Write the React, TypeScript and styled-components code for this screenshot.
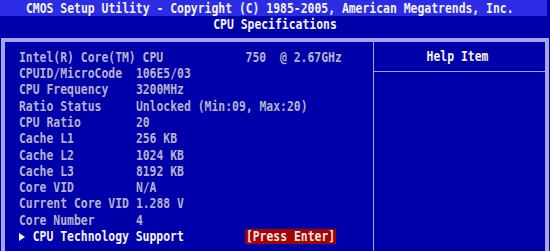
import React from "react";
import styled, { createGlobalStyle } from "styled-components";

const CH = 6.875;
const ROW = 16.3;
const LINE = "#a4a4ee";
const GREY = "#b4b4cc";

const Global = createGlobalStyle`
  html, body { margin: 0; padding: 0; background: #0000aa; overflow: hidden; }
  body { font-family: "DejaVu Sans Mono", "Liberation Mono", monospace; }
`;

const Screen = styled.div`
  width: 550px;
  height: 251px;
  overflow: hidden;
  background: #0000aa;
  display: flex;
  flex-direction: column;
  font-size: 11.42px;
  font-weight: bold;
`;

const Glyphs = styled.span<{ $color?: string }>`
  display: inline-block;
  white-space: pre;
  line-height: 1;
  transform: scaleY(1.22);
  color: ${(p) => p.$color ?? GREY};
`;

const TitleBar = styled.div`
  height: 17px;
  width: 547px;
  box-sizing: border-box;
  padding: 1px 0 0 26px;
  background: #2c2ce6;
  display: flex;
  align-items: center;
`;

const Subtitle = styled.div`
  height: 16px;
  box-sizing: border-box;
  padding-top: 2px;
  display: flex;
  align-items: center;
  justify-content: center;
`;

const Box = styled.div`
  margin: 7px 0 0 1px;
  width: 548px;
  height: 230px;
  box-sizing: border-box;
  border: 4px double ${LINE};
  border-bottom: none;
  display: grid;
  grid-template-columns: 368px 171px;
  column-gap: 1px;
  background: ${LINE};
`;

const LeftPanel = styled.div`
  background: #0000aa;
  padding: 7.6px 0 0 14px;
  display: flex;
  flex-direction: column;
`;

const RightPanel = styled.div`
  background: #0000aa;
  display: flex;
  flex-direction: column;
`;

const HelpHeader = styled.div`
  height: 30px;
  box-sizing: border-box;
  padding: 1px 4px 0 0;
  border-bottom: 1px solid ${LINE};
  display: flex;
  align-items: center;
  justify-content: center;
`;

const Row = styled.div`
  height: ${ROW}px;
  display: grid;
  grid-template-columns: ${17 * CH}px auto;
  align-items: center;
  justify-items: start;
`;

const SubRow = styled.div`
  height: ${ROW}px;
  display: grid;
  grid-template-columns: ${2 * CH}px ${31 * CH}px auto;
  align-items: center;
  justify-items: start;
`;

const Arrow = styled.svg`
  width: 6px;
  height: 8px;
  display: block;
`;

const Highlight = styled.span`
  display: inline-flex;
  align-items: center;
  height: 15px;
  margin-left: -1px;
  padding: 0 1px;
  background: #a80000;
`;

const rows: [string, string][] = [
  ["CPUID/MicroCode", "106E5/03"],
  ["CPU Frequency", "3200MHz"],
  ["Ratio Status", "Unlocked (Min:09, Max:20)"],
  ["CPU Ratio", "20"],
  ["Cache L1", "256 KB"],
  ["Cache L2", "1024 KB"],
  ["Cache L3", "8192 KB"],
  ["Core VID", "N/A"],
  ["Current Core VID", "1.288 V"],
  ["Core Number", "4"],
];

export default function App() {
  return (
    <>
      <Global />
      <Screen>
        <TitleBar>
          <Glyphs $color="#f4f4ff">
            CMOS Setup Utility - Copyright (C) 1985-2005, American Megatrends, Inc.
          </Glyphs>
        </TitleBar>
        <Subtitle>
          <Glyphs $color="#f4f4ff">CPU Specifications</Glyphs>
        </Subtitle>
        <Box>
          <LeftPanel>
            <Row>
              <Glyphs>{"Intel(R) Core(TM) CPU            750  @ 2.67GHz"}</Glyphs>
            </Row>
            {rows.map(([k, v]) => (
              <Row key={k}>
                <Glyphs>{k}</Glyphs>
                <Glyphs>{v}</Glyphs>
              </Row>
            ))}
            <SubRow>
              <Arrow viewBox="0 0 6 8">
                <path d="M0 0 L6 4 L0 8 Z" fill="#f0f0ff" />
              </Arrow>
              <Glyphs $color="#f4f4ff">CPU Technology Support</Glyphs>
              <Highlight>
                <Glyphs $color="#f4e8e8">[Press Enter]</Glyphs>
              </Highlight>
            </SubRow>
          </LeftPanel>
          <RightPanel>
            <HelpHeader>
              <Glyphs $color="#f4f4ff">Help Item</Glyphs>
            </HelpHeader>
          </RightPanel>
        </Box>
      </Screen>
    </>
  );
}
